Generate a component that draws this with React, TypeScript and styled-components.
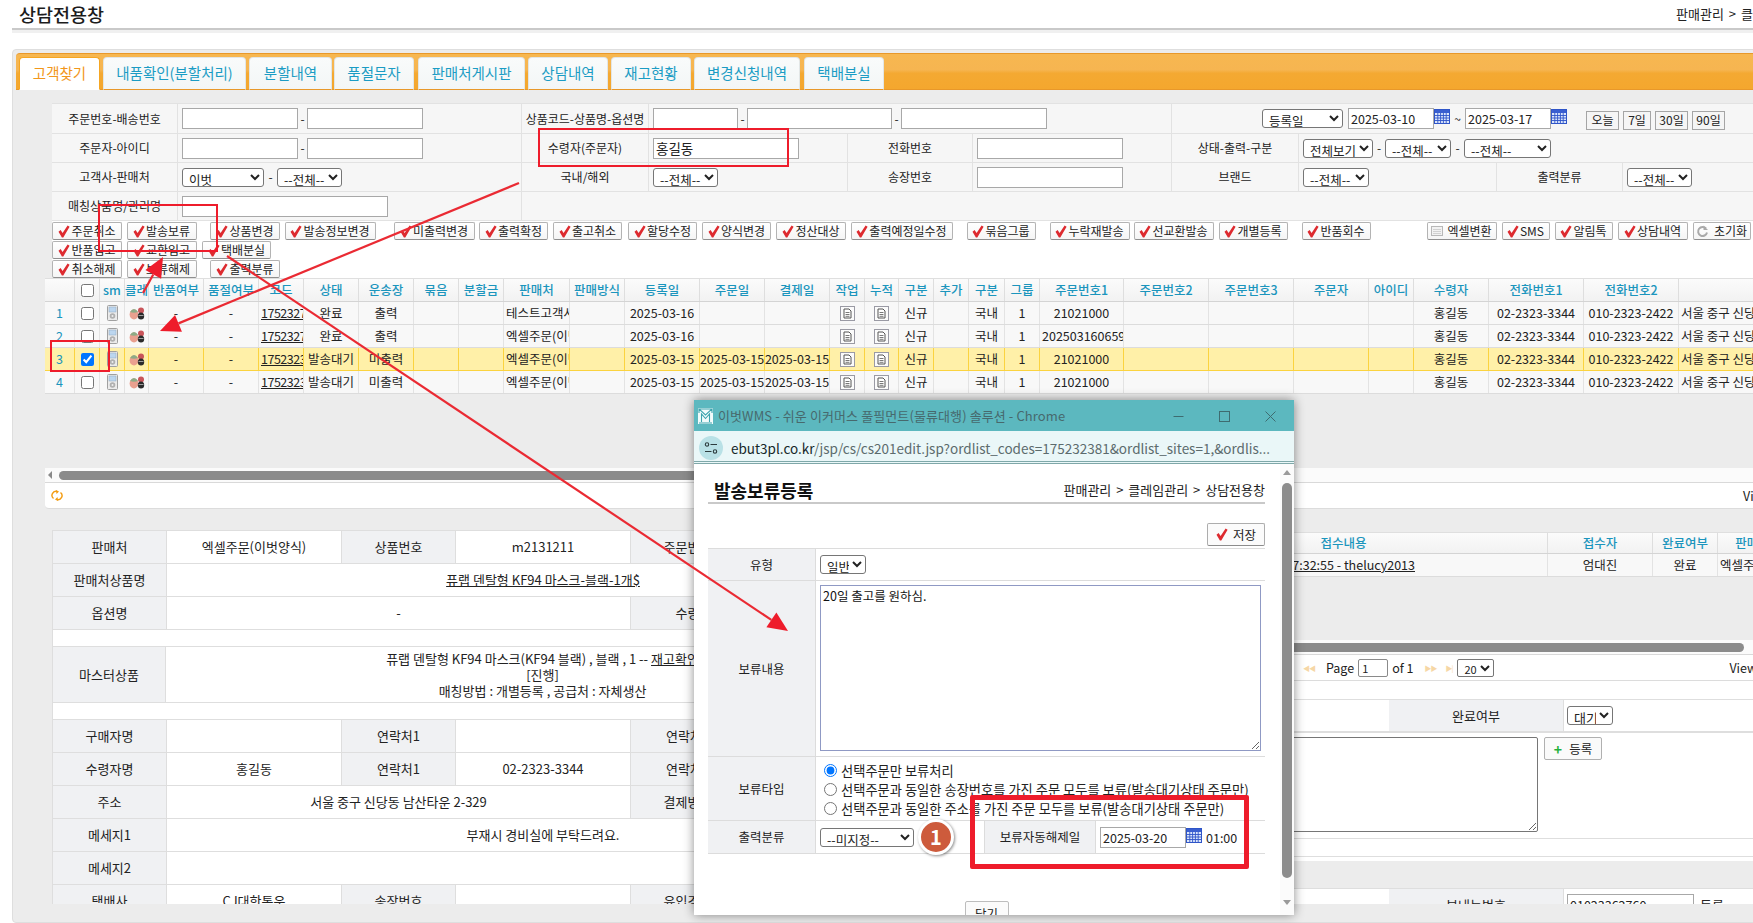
import React from "react";
import styled, { createGlobalStyle } from "styled-components";

const GlobalStyle = createGlobalStyle`
  html, body { margin: 0; padding: 0; background: #fff; overflow: hidden; }
  * { box-sizing: border-box; }
  body, input, select, textarea, button {
    font-family: "Noto Sans CJK KR", "Liberation Sans", sans-serif;
    color: #222;
  }
`;

const Page = styled.div`
  position: relative;
  width: 1753px;
  height: 923px;
  overflow: hidden;
  background: #fff;
`;

const TitleBar = styled.header`
  display: grid;
  grid-template-columns: 1664px 1fr;
  align-items: center;
  margin-left: 12px;
  height: 33px;
  border-bottom: 3px solid #f0f0f0;
  box-shadow: inset 0 -2px 0 #c9c9c9;
  padding-bottom: 2px;
`;
const Title = styled.h1`
  margin: 0 0 0 7px;
  font-size: 18.5px;
  line-height: 24px;
  font-weight: 500;
  color: #1c1c1c;
`;
const Crumb = styled.div`
  font-size: 13px;
  line-height: 18px;
  word-spacing: 2px;
  white-space: nowrap;
  overflow: hidden;
  color: #222;
`;

const Panel = styled.main`
  margin: 16px 0 0 12px;
  width: 1760px;
  height: 874px;
  border: 1px solid #dedede;
  border-radius: 4px;
  background: #ececec;
  padding: 3px 0 0 3px;
`;

const TabBar = styled.nav`
  display: flex;
  align-items: flex-end;
  height: 37px;
  padding-left: 3px;
  border-top: 1px solid #e8982a;
  border-bottom: 1px solid #e8982a;
  border-radius: 4px 0 0 0;
  background: linear-gradient(#f7b750, #f6b551 45%, #f4a932 55%, #f4a72e);
`;
const Tab = styled.div<{ $active?: boolean; $w: number; $ml: number }>`
  width: ${(p) => p.$w}px;
  margin-left: ${(p) => p.$ml}px;
  height: 33px;
  padding-bottom: 2px;
  display: flex;
  align-items: center;
  justify-content: center;
  font-size: 14.5px;
  line-height: 20px;
  white-space: nowrap;
  border: 1px solid ${(p) => (p.$active ? "#f5a623" : "#e2e6e6")};
  border-bottom: ${(p) => (p.$active ? "1px solid #fff" : "1px solid #e8982a")};
  border-radius: 4px 4px 0 0;
  color: ${(p) => (p.$active ? "#f2971b" : "#1b9cc4")};
  background: ${(p) => (p.$active ? "#fff" : "linear-gradient(#f9fbfb, #f3f6f6)")};
  margin-bottom: -1px;
`;

const Search = styled.section`
  margin: 13px 0 0 36px;
  display: grid;
  grid-template-columns: 126px 344px 127px 199px 125px 199px 127px 198px 126px 130px;
  grid-template-rows: 30px 29px 29px 29px;
  border-top: 1px solid #e2e2e2;
  font-size: 12px;
  background: #f6f6f6;
`;
const SLabel = styled.div`
  display: flex;
  align-items: center;
  justify-content: center;
  border-right: 1px solid #e2e2e2;
  border-bottom: 1px solid #e2e2e2;
  white-space: nowrap;
  line-height: 16px;
`;
const SField = styled.div<{ $span?: number; $pad?: number; $open?: boolean }>`
  grid-column: span ${(p) => p.$span ?? 1};
  display: flex;
  align-items: center;
  padding-left: ${(p) => p.$pad ?? 4}px;
  border-right: ${(p) => (p.$open ? "0" : "1px solid #e2e2e2")};
  border-bottom: 1px solid #e2e2e2;
  line-height: 16px;
  white-space: nowrap;
`;
const TextBox = styled.input<{ $w: number }>`
  width: ${(p) => p.$w}px;
  height: 21px;
  padding: 0 2px;
  border: 1px solid #a8a8a8;
  border-radius: 0;
  background: #fff;
  font-size: 12.5px;
  outline: none;
`;
const Pick = styled.select<{ $w: number }>`
  width: ${(p) => p.$w}px;
  height: 19px;
  padding: 0 0 0 2px;
  border: 1px solid #767676;
  border-radius: 3px;
  background: #fff;
  font-size: 12.5px;
  outline: none;
`;
const Dash = styled.span<{ $w?: number }>`
  width: ${(p) => p.$w ?? 9}px;
  text-align: center;
  font-size: 12px;
`;
const DayBtn = styled.button<{ $w: number; $ml: number }>`
  width: ${(p) => p.$w}px;
  height: 19px;
  margin: 3px 0 0 ${(p) => p.$ml}px;
  padding: 0;
  border: 1px solid #a5a5a5;
  background: #f5f5f5;
  font-size: 12px;
  line-height: 16px;
`;

const Toolbar = styled.section`
  height: 57px;
  margin-left: 36px;
  padding-top: 1px;
  display: flex;
  flex-direction: column;
  gap: 1px;
  background: #fff;
`;
const ToolRow = styled.div`
  display: flex;
  height: 18px;
`;
const ToolBtn = styled.button<{ $w: number; $ml: number }>`
  width: ${(p) => p.$w}px;
  margin-left: ${(p) => p.$ml}px;
  height: 18px;
  padding: 0;
  display: flex;
  align-items: center;
  justify-content: center;
  gap: 1px;
  border: 1px solid #b3b3b3;
  border-bottom-color: #8f8f8f;
  border-radius: 2px;
  background: linear-gradient(#fff, #f5f5f5);
  font-size: 12px;
  line-height: 16px;
  white-space: nowrap;
  flex: none;
`;

const GridBlock = styled.section`
  margin-left: 29px;
  width: 1730px;
`;
const HeadRow = styled.div<{ $cols: string; $h?: number }>`
  display: grid;
  grid-template-columns: ${(p) => p.$cols};
  height: ${(p) => p.$h ?? 24}px;
  border-top: 1px solid #dfdfdf;
  border-bottom: 1px solid #d4d4d4;
  background: linear-gradient(#fbfbfb, #f2f2f2);
  overflow: hidden;
`;
const HeadCell = styled.div`
  display: flex;
  align-items: center;
  justify-content: center;
  border-right: 1px solid #dedede;
  font-size: 12.5px;
  font-weight: 500;
  line-height: 16px;
  color: #1b95bd;
  white-space: nowrap;
  overflow: hidden;
`;
const DataRow = styled.div<{ $cols: string; $on?: boolean }>`
  display: grid;
  grid-template-columns: ${(p) => p.$cols};
  height: 23px;
  border-bottom: 1px solid ${(p) => (p.$on ? "#fbd33f" : "#dcdcdc")};
  background: ${(p) => (p.$on ? "#fff0a8" : "#f8f8f8")};
  overflow: hidden;
`;
const DataCell = styled.div<{ $on?: boolean; $left?: boolean; $blue?: boolean }>`
  display: flex;
  align-items: center;
  justify-content: ${(p) => (p.$left ? "flex-start" : "center")};
  padding-left: ${(p) => (p.$left ? 2 : 0)}px;
  border-right: 1px solid ${(p) => (p.$on ? "#fbd33f" : "#e3e3e3")};
  font-size: 12.5px;
  line-height: 16px;
  white-space: nowrap;
  overflow: hidden;
  color: ${(p) => (p.$blue ? "#1b95bd" : "#222")};
`;
const Link = styled.span`
  text-decoration: underline;
`;
const CodeLink = styled(Link)`
  letter-spacing: -0.5px;
`;
const GridGap = styled.div<{ $h: number }>`
  height: ${(p) => p.$h}px;
  background: #ececec;
`;
const Track = styled.div`
  position: relative;
  height: 15px;
  background: #fbfbfb;
  border-bottom: 1px solid #d9d9d9;
  display: flex;
  align-items: center;
`;
const TrackArrow = styled.span`
  margin-left: 3px;
  width: 0;
  height: 0;
  border-top: 4px solid transparent;
  border-bottom: 4px solid transparent;
  border-right: 4px solid #8a8a8a;
`;
const Thumb = styled.div<{ $ml: number; $w: number }>`
  margin-left: ${(p) => p.$ml}px;
  width: ${(p) => p.$w}px;
  height: 9px;
  border-radius: 5px;
  background: #8b8b8b;
`;
const GridFoot = styled.div`
  display: flex;
  align-items: center;
  height: 26px;
  background: #fff;
  border-bottom: 1px solid #dcdcdc;
  border-radius: 0 0 0 4px;
  font-size: 12.5px;
  white-space: nowrap;
  overflow: hidden;
`;

const Lower = styled.section`
  display: flex;
  margin-top: 21px;
  height: 374px;
  overflow: hidden;
`;
const FormCol = styled.div`
  margin-left: 36px;
  width: 868px;
  flex: none;
  background: #fff;
  border-top: 1px solid #dedede;
  border-left: 1px solid #dedede;
  height: 374px;
`;
const FormGrid = styled.div`
  display: grid;
  grid-template-columns: 114px 175px 114px 175px 114px 175px;
  grid-auto-rows: 33px;
`;
const FLabel = styled.div`
  display: flex;
  align-items: center;
  justify-content: center;
  background: #f0f1f3;
  border-right: 1px solid #dedede;
  border-bottom: 1px solid #dedede;
  font-size: 13px;
  line-height: 18px;
  white-space: nowrap;
`;
const FValue = styled.div<{ $span?: number }>`
  grid-column: span ${(p) => p.$span ?? 1};
  display: flex;
  align-items: center;
  justify-content: center;
  background: #fff;
  border-right: 1px solid #dedede;
  border-bottom: 1px solid #dedede;
  font-size: 13px;
  line-height: 18px;
  white-space: nowrap;
`;
const FormGap = styled.div`
  height: 17px;
  background: #fff;
  border-bottom: 1px solid #dedede;
`;
const MasterGrid = styled.div`
  display: grid;
  grid-template-columns: 113px 754px;
  height: 56px;
`;
const MasterText = styled.div`
  text-align: center;
  font-size: 13px;
  line-height: 16px;
  white-space: nowrap;
`;

const RightCol = styled.div`
  margin-left: 41px;
  width: 800px;
  flex: none;
`;
const LogRowText = styled.div`
  width: 100%;
  display: flex;
  justify-content: flex-end;
  padding-right: 132px;
`;
const PagerText = styled.span<{ $ml?: number }>`
  margin-left: ${(p) => p.$ml ?? 0}px;
  font-size: 12.5px;
  color: #222;
`;
const PagerSep = styled.span<{ $ml: number }>`
  margin-left: ${(p) => p.$ml}px;
  width: 2px;
  height: 18px;
  background: #e6e6e6;
`;
const PagerIcon = styled.span<{ $ml: number }>`
  margin-left: ${(p) => p.$ml}px;
  font-size: 7px;
  line-height: 12px;
  letter-spacing: -1px;
  color: #f6d7a6;
`;
const PageBox = styled.input`
  width: 30px;
  height: 18px;
  margin-left: 4px;
  padding: 0 3px;
  border: 1px solid #8a8a8a;
  border-radius: 2px;
  font-size: 11px;
  outline: none;
`;
const PageSize = styled.select`
  width: 37px;
  height: 18px;
  margin-left: 5px;
  padding: 0 0 0 2px;
  border: 1px solid #767676;
  border-radius: 2px;
  background: #fff;
  font-size: 11px;
`;
const RightForm = styled.div`
  background: #fff;
  padding-top: 18px;
  height: 180px;
`;
const RightGrid = styled.div<{ $h: number; $gap?: boolean }>`
  display: grid;
  grid-template-columns: 140px 288px 175px 1fr;
  height: ${(p) => p.$h}px;
  border-top: 1px solid #dedede;
  margin-bottom: ${(p) => (p.$gap ? 17 : 0)}px;
`;
const RLabel = styled(FLabel)``;
const RValue = styled.div<{ $span?: number; $pad?: number }>`
  grid-column: span ${(p) => p.$span ?? 1};
  display: flex;
  align-items: center;
  gap: 6px;
  padding-left: ${(p) => p.$pad ?? 3}px;
  border-bottom: 1px solid #dedede;
  background: #fff;
  font-size: 13px;
  white-space: nowrap;
`;
const WriteRow = styled(RValue)`
  align-items: flex-start;
  padding-top: 4px;
`;
const Memo = styled.textarea`
  width: 432px;
  height: 95px;
  border: 1px solid #767676;
  border-radius: 2px;
  outline: none;
`;
const AddBtn = styled.button`
  width: 58px;
  height: 23px;
  display: flex;
  align-items: center;
  justify-content: center;
  gap: 7px;
  padding: 0;
  border: 1px solid #b0b0b0;
  border-radius: 2px;
  background: #fafafa;
  font-size: 12.5px;
`;
const Plus = styled.span`
  color: #22b03c;
  font-weight: 700;
  font-size: 14px;
  line-height: 14px;
`;

/* Popup window */
const Popup = styled.aside`
  position: absolute;
  left: 694px;
  top: 400px;
  width: 600px;
  height: 515px;
  z-index: 10;
  display: flex;
  flex-direction: column;
  background: #fff;
  box-shadow: 0 0 10px rgba(0, 0, 0, 0.45);
`;
const WinTitle = styled.div`
  height: 31px;
  flex: none;
  display: flex;
  align-items: center;
  padding: 1px 0 0 4px;
  background: #5cb8bf;
  font-size: 13px;
  line-height: 16px;
  color: #47696d;
  white-space: nowrap;
`;
const WinTitleText = styled.span`
  margin-left: 5px;
  letter-spacing: 0.1px;
`;
const WinCtrls = styled.div`
  margin-left: auto;
  display: flex;
  gap: 35px;
  padding-right: 18px;
  align-items: center;
`;
const UrlBar = styled.div`
  height: 33px;
  flex: none;
  display: flex;
  align-items: center;
  padding: 3px 0 0 5px;
  gap: 8px;
  background: #eaf7f8;
  border-bottom: 3px double #7fa8a9;
  font-size: 13.5px;
  line-height: 18px;
  white-space: nowrap;
  color: #5c6b6d;
`;
const UrlHost = styled.span`
  color: #16282a;
`;
const SiteIcon = styled.span`
  width: 24px;
  height: 24px;
  border-radius: 50%;
  background: #b9e1e6;
  display: flex;
  align-items: center;
  justify-content: center;
  flex: none;
`;
const WinBody = styled.div`
  flex: 1;
  display: flex;
  min-height: 0;
  overflow: hidden;
`;
const Sheet = styled.div`
  width: 586px;
  padding-left: 14px;
  padding-right: 15px;
  flex: none;
`;
const SheetHead = styled.div`
  display: flex;
  align-items: center;
  justify-content: space-between;
  height: 40px;
  border-bottom: 2px solid #c9c9c9;
  padding: 14px 0 0 6px;
`;
const SheetTitle = styled.h2`
  margin: 0;
  font-size: 18px;
  line-height: 22px;
  font-weight: 700;
  color: #111;
`;
const SheetCrumb = styled.div`
  font-size: 13px;
  line-height: 16px;
  word-spacing: 2px;
  white-space: nowrap;
`;
const SaveRow = styled.div`
  display: flex;
  justify-content: flex-end;
  padding-top: 19px;
  height: 44px;
`;
const SaveBtn = styled.button`
  width: 58px;
  height: 23px;
  display: flex;
  align-items: center;
  justify-content: center;
  gap: 5px;
  padding: 0;
  border: 1px solid #adadad;
  border-bottom-color: #8c8c8c;
  border-radius: 2px;
  background: #fbfbfb;
  font-size: 12.5px;
`;
const SheetGrid = styled.div<{ $h: number; $cols?: string }>`
  display: grid;
  grid-template-columns: ${(p) => p.$cols ?? "108px 449px"};
  height: ${(p) => p.$h}px;
  border-bottom: 1px solid #dcdcdc;
`;
const SheetFirst = styled.div`
  border-top: 1px solid #dcdcdc;
`;
const PLabel = styled.div`
  display: flex;
  align-items: center;
  justify-content: center;
  background: #f0f1f3;
  border-right: 1px solid #dcdcdc;
  font-size: 12.5px;
  line-height: 16px;
  white-space: nowrap;
`;
const PValue = styled.div`
  display: flex;
  align-items: center;
  padding-left: 4px;
  font-size: 12.5px;
  white-space: nowrap;
`;
const PArea = styled.textarea`
  width: 441px;
  height: 166px;
  margin: 4px 0 0 0;
  padding: 2px 2px;
  border: 1px solid #8f99c4;
  font-size: 12.5px;
  line-height: 16px;
  outline: none;
  color: #111;
`;
const Radios = styled.div`
  display: flex;
  flex-direction: column;
  justify-content: center;
  padding: 2px 0 0 8px;
`;
const RadioLine = styled.label`
  display: flex;
  align-items: center;
  gap: 4px;
  height: 19px;
  font-size: 13.25px;
  line-height: 16px;
  white-space: nowrap;
`;
const Radio = styled.input`
  margin: 0;
  width: 13px;
  height: 13px;
  flex: none;
`;
const CloseRow = styled.div`
  display: flex;
  justify-content: center;
  margin-top: 47px;
`;
const CloseBtn = styled.button`
  width: 44px;
  height: 24px;
  padding: 0;
  border: 1px solid #bdbdbd;
  border-radius: 2px;
  background: #fbfbfb;
  font-size: 12.5px;
  flex: none;
`;
const WinScroll = styled.div`
  width: 14px;
  flex: none;
  display: flex;
  flex-direction: column;
  align-items: center;
  padding: 6px 0 6px;
  background: #fbfbfb;
`;
const ScrollUp = styled.span`
  width: 0;
  height: 0;
  border-left: 4px solid transparent;
  border-right: 4px solid transparent;
  border-bottom: 5px solid #9a9a9a;
`;
const ScrollDown = styled.span`
  width: 0;
  height: 0;
  border-left: 4px solid transparent;
  border-right: 4px solid transparent;
  border-top: 5px solid #9a9a9a;
  margin-top: 22px;
`;
const ScrollThumb = styled.div`
  width: 10px;
  height: 395px;
  margin-top: 8px;
  border-radius: 5px;
  background: #8c8c8c;
`;
const Flag = styled.div`
  position: absolute;
  left: 276px;
  top: 395px;
  width: 279px;
  height: 74px;
  border: 5px solid #ee1c2b;
  border-radius: 2px;
  pointer-events: none;
`;
const Badge = styled.div`
  position: absolute;
  left: 224px;
  top: 419px;
  width: 36px;
  height: 36px;
  border-radius: 50%;
  display: flex;
  align-items: center;
  justify-content: center;
  background: #cd5b3c;
  border: 3px solid #fff;
  box-shadow: 1px 1px 3px rgba(0, 0, 0, 0.45);
  color: #fff;
  font-size: 20px;
  line-height: 20px;
  font-weight: 700;
`;
const Overlay = styled.svg`
  position: absolute;
  left: 0;
  top: 0;
  z-index: 20;
  pointer-events: none;
`;

/* Drawings */
const Check = () => (
  <svg width="12" height="13" viewBox="0 0 12 13">
    <path d="M0.5 6.8 L2.6 5 L4.6 8 L9.6 0.6 L11.6 1.8 L5.3 12.4 L3.9 12.4 Z" fill="#dd2a2f" />
  </svg>
);
const Cal = () => (
  <svg width="16" height="15" viewBox="0 0 16 15" style={{ flex: "none", marginTop: -4 }}>
    <rect x="0.5" y="0.5" width="15" height="14" fill="#dbe6fb" stroke="#2f55c8" />
    <rect x="1" y="1" width="14" height="3" fill="#3a5fd0" />
    <path d="M1 6.5H15M1 9H15M1 11.5H15M3.8 4V14M6.6 4V14M9.4 4V14M12.2 4V14" stroke="#2f55c8" strokeWidth="0.9" />
  </svg>
);
const DocIcon = () => (
  <svg width="15" height="15" viewBox="0 0 15 15">
    <rect x="0.5" y="0.5" width="14" height="14" fill="#fbfbfb" stroke="#9a9aa4" />
    <path d="M4 3H9L11 5V12H4Z" fill="#fff" stroke="#555" strokeWidth="1" />
    <path d="M5.5 6.5H9.5M5.5 8.5H9.5M5.5 10.3H9.5" stroke="#555" strokeWidth="0.8" />
  </svg>
);
const SmIcon = () => (
  <svg width="11" height="16" viewBox="0 0 11 16">
    <rect x="0.5" y="0.5" width="10" height="15" rx="1" fill="#ebebeb" stroke="#a0a0a0" />
    <rect x="2" y="2" width="7" height="5" fill="#bcd6ef" stroke="#8fa8c0" strokeWidth="0.5" />
    <circle cx="5.5" cy="11" r="2.8" fill="#b0b0b0" />
    <circle cx="5.5" cy="11" r="1" fill="#efefef" />
  </svg>
);
const ClaimIcon = () => (
  <svg width="16" height="13" viewBox="0 0 16 13">
    <ellipse cx="5" cy="7.5" rx="4.4" ry="5" fill="#e9a08f" />
    <path d="M1 5 Q5 -1 9 5 Q5 6.5 1 5Z" fill="#8dab86" />
    <circle cx="12" cy="3.5" r="3" fill="#c9555a" />
    <ellipse cx="12" cy="9" rx="3.2" ry="3.6" fill="#2b2b2b" />
    <path d="M9.5 8.5H14.5" stroke="#bbb" strokeWidth="0.8" />
  </svg>
);
const Refresh = () => (
  <svg width="12" height="13" viewBox="0 0 12 13" style={{ marginLeft: 6, flex: "none" }}>
    <path d="M2.5 9.5A4 4 0 0 1 6 2.5M9.5 3.5A4 4 0 0 1 6 10.5" fill="none" stroke="#f39c12" strokeWidth="1.4" />
    <path d="M5 1L8 2.5L5.5 5M7 12L4 10.5L6.5 8" fill="#f39c12" />
  </svg>
);
const ExcelIcon = () => (
  <svg width="12" height="12" viewBox="0 0 12 12" style={{ marginRight: 3 }}>
    <rect x="0.5" y="1.5" width="11" height="9" fill="#f2f2f2" stroke="#b8b8b8" />
    <path d="M2.5 4.5H9.5M2.5 6.5H9.5M2.5 8.5H9.5" stroke="#b0b0b0" strokeDasharray="1 1" />
  </svg>
);
const ResetIcon = () => (
  <svg width="13" height="13" viewBox="0 0 13 13" style={{ marginRight: 4 }}>
    <path d="M10 3.5A4.5 4.5 0 1 0 11 7.5" fill="none" stroke="#a9a9a9" strokeWidth="2" />
    <path d="M7.5 0.5V5H12Z" fill="#a9a9a9" />
  </svg>
);
const Logo = () => (
  <svg width="15" height="16" viewBox="0 0 15 16" style={{ flex: "none" }}>
    <rect width="15" height="16" fill="#f2fbfb" />
    <path d="M1 1H14L7.5 7ZM1 15H14M3.5 14V6L7.5 10.5L11.5 6V14M1 1V5M14 1V5" fill="none" stroke="#3da4ae" strokeWidth="1.1" />
  </svg>
);
const WinMin = () => (
  <svg width="11" height="11" viewBox="0 0 11 11"><path d="M0.5 5.5H10.5" stroke="#3e6c70" /></svg>
);
const WinMax = () => (
  <svg width="11" height="11" viewBox="0 0 11 11"><rect x="0.5" y="0.5" width="10" height="10" fill="none" stroke="#3e6c70" /></svg>
);
const WinClose = () => (
  <svg width="11" height="11" viewBox="0 0 11 11"><path d="M0.5 0.5L10.5 10.5M10.5 0.5L0.5 10.5" stroke="#3e6c70" /></svg>
);
const TuneIcon = () => (
  <svg width="14" height="12" viewBox="0 0 14 12">
    <circle cx="3" cy="2.5" r="1.7" fill="none" stroke="#2c3b3d" strokeWidth="1.1" />
    <path d="M6.5 2.5H13M1 9.5H7.5" stroke="#2c3b3d" strokeWidth="1.2" />
    <circle cx="11" cy="9.5" r="1.7" fill="none" stroke="#2c3b3d" strokeWidth="1.1" />
  </svg>
);

const Arrow = ({ x1, y1, x2, y2 }: { x1: number; y1: number; x2: number; y2: number }) => {
  const a = Math.atan2(y2 - y1, x2 - x1);
  const len = 20;
  const half = 9;
  const bx = x2 - len * Math.cos(a);
  const by = y2 - len * Math.sin(a);
  const nx = -Math.sin(a) * half;
  const ny = Math.cos(a) * half;
  return (
    <g>
      <line x1={x1} y1={y1} x2={bx} y2={by} stroke="#ea2a33" strokeWidth="2.2" />
      <polygon points={`${x2},${y2} ${bx + nx},${by + ny} ${bx - nx},${by - ny}`} fill="#ee1c2b" />
    </g>
  );
};

/* Data */
const tabs: [string, number, number, boolean?][] = [
  ["고객찾기", 81, 0, true],
  ["내품확인(분할처리)", 143, 3],
  ["분할내역", 83, 3],
  ["품절문자", 80, 2],
  ["판매처게시판", 107, 4],
  ["상담내역", 80, 3],
  ["재고현황", 80, 3],
  ["변경신청내역", 106, 3],
  ["택배분실", 80, 4],
];

type Tool = { t: string; w: number; ml: number; icon?: "excel" | "reset" };
const row1: Tool[] = [
  { t: "주문취소", w: 70, ml: 0 },
  { t: "발송보류", w: 70, ml: 4.5 },
  { t: "상품변경", w: 70, ml: 13.5 },
  { t: "발송정보변경", w: 91, ml: 4.5 },
  { t: "미출력변경", w: 81, ml: 18 },
  { t: "출력확정", w: 69, ml: 4.5 },
  { t: "출고취소", w: 69, ml: 5 },
  { t: "할당수정", w: 69, ml: 6 },
  { t: "양식변경", w: 69, ml: 5 },
  { t: "정산대상", w: 70, ml: 5 },
  { t: "출력예정일수정", w: 102, ml: 4.5 },
  { t: "묶음그룹", w: 69, ml: 14 },
  { t: "누락재발송", w: 80, ml: 14 },
  { t: "선교환발송", w: 80, ml: 4 },
  { t: "개별등록", w: 69, ml: 5 },
  { t: "반품회수", w: 69, ml: 14 },
  { t: "엑셀변환", w: 70, ml: 56, icon: "excel" },
  { t: "SMS", w: 48, ml: 5 },
  { t: "알림톡", w: 58, ml: 5 },
  { t: "상담내역", w: 70, ml: 5 },
  { t: "초기화", w: 58, ml: 5, icon: "reset" },
];
const row2: Tool[] = [
  { t: "반품입고", w: 70, ml: 0 },
  { t: "교환입고", w: 70, ml: 4.5 },
  { t: "택배분실", w: 69, ml: 5.5 },
];
const row3: Tool[] = [
  { t: "취소해제", w: 70, ml: 0 },
  { t: "보류해제", w: 70, ml: 4.5 },
  { t: "출력분류", w: 70, ml: 13.5 },
];

const gridCols =
  "30px 25px 25px 24px 55px 55px 45px 55px 55px 45px 45px 66px 55px 75px 65px 65px 35px 34px 35px 35px 36px 35px 84px 85px 85px 75px 45px 75px 95px 95px 200px";
const heads = [
  "", "", "sm", "클레", "반품여부", "품절여부", "코드", "상태", "운송장", "묶음", "분할금", "판매처", "판매방식",
  "등록일", "주문일", "결제일", "작업", "누적", "구분", "추가", "구분", "그룹", "주문번호1", "주문번호2", "주문번호3",
  "주문자", "아이디", "수령자", "전화번호1", "전화번호2", "주소",
];
type Order = {
  code: string; state: string; print: string; shop: string; reg: string; ord: string; pay: string; no1: string;
};
const orders: Order[] = [
  { code: "175232781", state: "완료", print: "출력", shop: "테스트고객사", reg: "2025-03-16", ord: "", pay: "", no1: "21021000" },
  { code: "175232780", state: "완료", print: "출력", shop: "엑셀주문(이벗양식)", reg: "2025-03-16", ord: "", pay: "", no1: "202503160659411" },
  { code: "175232381", state: "발송대기", print: "미출력", shop: "엑셀주문(이벗양식)", reg: "2025-03-15", ord: "2025-03-15", pay: "2025-03-15", no1: "21021000" },
  { code: "175232380", state: "발송대기", print: "미출력", shop: "엑셀주문(이벗양식)", reg: "2025-03-15", ord: "2025-03-15", pay: "2025-03-15", no1: "21021000" },
];

const logCols = "179px 408px 105px 65px 70px";

const ToolButtons = ({ list }: { list: Tool[] }) => (
  <ToolRow>
    {list.map((b) => (
      <ToolBtn key={b.t} $w={b.w} $ml={b.ml}>
        {b.icon === "excel" ? <ExcelIcon /> : b.icon === "reset" ? <ResetIcon /> : <Check />}
        {b.t}
      </ToolBtn>
    ))}
  </ToolRow>
);

export default function App() {
  return (
    <Page>
      <GlobalStyle />
      <TitleBar>
        <Title>상담전용창</Title>
        <Crumb>판매관리 &gt; 클레임관리 &gt; 상담전용창</Crumb>
      </TitleBar>

      <Panel>
        <TabBar>
          {tabs.map(([t, w, ml, active]) => (
            <Tab key={t} $w={w} $ml={ml} $active={active}>{t}</Tab>
          ))}
        </TabBar>

        <Search>
          <SLabel>주문번호-배송번호</SLabel>
          <SField>
            <TextBox $w={116} /><Dash>-</Dash>
            <TextBox $w={116} />
          </SField>
          <SLabel>상품코드-상품명-옵션명</SLabel>
          <SField $span={3}>
            <TextBox $w={85} /><Dash>-</Dash>
            <TextBox $w={145} /><Dash>-</Dash>
            <TextBox $w={146} />
          </SField>
          <SField $span={4} $pad={90} $open>
            <Pick $w={81} defaultValue="등록일"><option>등록일</option></Pick>
            <TextBox $w={86} defaultValue="2025-03-10" style={{ marginLeft: 5 }} />
            <Cal />
            <Dash $w={15}>~</Dash>
            <TextBox $w={86} defaultValue="2025-03-17" />
            <Cal />
            <DayBtn $w={33} $ml={19}>오늘</DayBtn>
            <DayBtn $w={28} $ml={4}>7일</DayBtn>
            <DayBtn $w={33} $ml={4}>30일</DayBtn>
            <DayBtn $w={33} $ml={4}>90일</DayBtn>
          </SField>

          <SLabel>주문자-아이디</SLabel>
          <SField>
            <TextBox $w={116} /><Dash>-</Dash>
            <TextBox $w={116} />
          </SField>
          <SLabel>수령자(주문자)</SLabel>
          <SField><TextBox $w={146} defaultValue="홍길동" style={{ fontSize: 13.5 }} /></SField>
          <SLabel>전화번호</SLabel>
          <SField><TextBox $w={146} /></SField>
          <SLabel>상태-출력-구분</SLabel>
          <SField $span={3} $open>
            <Pick $w={70} defaultValue="전체보기"><option>전체보기</option></Pick><Dash $w={12}>-</Dash>
            <Pick $w={66} defaultValue="--전체--"><option>--전체--</option></Pick><Dash $w={13}>-</Dash>
            <Pick $w={87} defaultValue="--전체--"><option>--전체--</option></Pick>
          </SField>

          <SLabel>고객사-판매처</SLabel>
          <SField>
            <Pick $w={82} defaultValue="이벗"><option>이벗</option></Pick><Dash $w={13}>-</Dash>
            <Pick $w={65} defaultValue="--전체--"><option>--전체--</option></Pick>
          </SField>
          <SLabel>국내/해외</SLabel>
          <SField><Pick $w={65} defaultValue="--전체--"><option>--전체--</option></Pick></SField>
          <SLabel>송장번호</SLabel>
          <SField><TextBox $w={146} /></SField>
          <SLabel>브랜드</SLabel>
          <SField><Pick $w={66} defaultValue="--전체--"><option>--전체--</option></Pick></SField>
          <SLabel>출력분류</SLabel>
          <SField $open><Pick $w={65} defaultValue="--전체--"><option>--전체--</option></Pick></SField>

          <SLabel>매칭상품명/관리명</SLabel>
          <SField><TextBox $w={206} /></SField>
          <SField $span={8} $open />
        </Search>

        <Toolbar>
          <ToolButtons list={row1} />
          <ToolButtons list={row2} />
          <ToolButtons list={row3} />
        </Toolbar>

        <GridBlock>
          <HeadRow $cols={gridCols}>
            {heads.map((h, i) => (
              <HeadCell key={i}>
                {i === 1 ? <input type="checkbox" style={{ margin: 0 }} /> : h}
              </HeadCell>
            ))}
          </HeadRow>
          {orders.map((o, i) => {
            const on = i === 2;
            const text = (s: string, left?: boolean) => <DataCell $on={on} $left={left}>{s}</DataCell>;
            return (
              <DataRow key={o.code} $cols={gridCols} $on={on}>
                <DataCell $on={on} $blue>{i + 1}</DataCell>
                <DataCell $on={on}><input type="checkbox" defaultChecked={on} style={{ margin: 0 }} /></DataCell>
                <DataCell $on={on}><SmIcon /></DataCell>
                <DataCell $on={on}><ClaimIcon /></DataCell>
                {text("-")}
                {text("-")}
                <DataCell $on={on} $left><CodeLink>{o.code}</CodeLink></DataCell>
                {text(o.state)}
                {text(o.print)}
                {text("")}
                {text("")}
                {text(o.shop, true)}
                {text("")}
                {text(o.reg)}
                {text(o.ord)}
                {text(o.pay)}
                <DataCell $on={on}><DocIcon /></DataCell>
                <DataCell $on={on}><DocIcon /></DataCell>
                {text("신규")}
                {text("")}
                {text("국내")}
                {text("1")}
                <DataCell $on={on} $left={o.no1.length > 10}>{o.no1}</DataCell>
                {text("")}
                {text("")}
                {text("")}
                {text("")}
                {text("홍길동")}
                {text("02-2323-3344")}
                {text("010-2323-2422")}
                {text("서울 중구 신당동 남산타운 2-329", true)}
              </DataRow>
            );
          })}
          <GridGap $h={74} />
          <Track>
            <TrackArrow />
            <Thumb $ml={7} $w={840} />
          </Track>
          <GridFoot>
            <Refresh />
            <PagerText $ml={1680}>View 1 - 4 of 4</PagerText>
          </GridFoot>
        </GridBlock>

        <Lower>
          <FormCol>
            <FormGrid>
              <FLabel>판매처</FLabel><FValue>엑셀주문(이벗양식)</FValue>
              <FLabel>상품번호</FLabel><FValue>m2131211</FValue>
              <FLabel>주문번호</FLabel><FValue>175232381</FValue>
              <FLabel>판매처상품명</FLabel>
              <FValue $span={5}><Link>퓨랩 덴탈형 KF94 마스크-블랙-1개$</Link></FValue>
              <FLabel>옵션명</FLabel><FValue $span={3}>-</FValue>
              <FLabel>수량</FLabel><FValue>1</FValue>
            </FormGrid>
            <FormGap />
            <MasterGrid>
              <FLabel>마스터상품</FLabel>
              <FValue>
                <MasterText>
                  퓨랩 덴탈형 KF94 마스크(KF94 블랙) , 블랙 , 1 -- <Link>재고확인</Link>
                  <br />[진행]
                  <br />매칭방법 : 개별등록 , 공급처 : 자체생산
                </MasterText>
              </FValue>
            </MasterGrid>
            <FormGap />
            <FormGrid>
              <FLabel>구매자명</FLabel><FValue />
              <FLabel>연락처1</FLabel><FValue />
              <FLabel>연락처2</FLabel><FValue />
              <FLabel>수령자명</FLabel><FValue>홍길동</FValue>
              <FLabel>연락처1</FLabel><FValue>02-2323-3344</FValue>
              <FLabel>연락처2</FLabel><FValue>010-2323-2422</FValue>
              <FLabel>주소</FLabel><FValue $span={3}>서울 중구 신당동 남산타운 2-329</FValue>
              <FLabel>결제방법</FLabel><FValue />
              <FLabel>메세지1</FLabel><FValue $span={5}>부재시 경비실에 부탁드려요.</FValue>
              <FLabel>메세지2</FLabel><FValue $span={5} />
              <FLabel>택배사</FLabel><FValue>CJ대한통운</FValue>
              <FLabel>송장번호</FLabel><FValue />
              <FLabel>유입경로</FLabel><FValue />
            </FormGrid>
          </FormCol>

          <RightCol>
            <GridGap $h={2} />
            <HeadRow $cols={logCols} $h={22}>
              <HeadCell>접수일</HeadCell>
              <HeadCell>접수내용</HeadCell>
              <HeadCell>접수자</HeadCell>
              <HeadCell>완료여부</HeadCell>
              <HeadCell>판매처</HeadCell>
            </HeadRow>
            <DataRow $cols={logCols}>
              <DataCell />
              <DataCell>
                <LogRowText><Link>17:32:55 - thelucy2013</Link></LogRowText>
              </DataCell>
              <DataCell>엄대진</DataCell>
              <DataCell>완료</DataCell>
              <DataCell $left>엑셀주문(이벗양식)</DataCell>
            </DataRow>
            <GridGap $h={63} />
            <Track>
              <Thumb $ml={6} $w={777} />
            </Track>
            <GridFoot>
              <PagerIcon $ml={342}>◀◀</PagerIcon>
              <PagerSep $ml={7} />
              <PagerText $ml={4}>Page</PagerText>
              <PageBox defaultValue="1" />
              <PagerText $ml={4}>of 1</PagerText>
              <PagerSep $ml={5} />
              <PagerIcon $ml={6}>▶▶</PagerIcon>
              <PagerIcon $ml={9}>▶|</PagerIcon>
              <PageSize defaultValue="20"><option>20</option></PageSize>
              <PagerText $ml={235}>View 1 - 1 of 1</PagerText>
            </GridFoot>
            <RightForm>
              <RightGrid $h={33}>
                <RLabel>접수유형</RLabel>
                <RValue><Pick $w={60} defaultValue="일반"><option>일반</option></Pick></RValue>
                <RLabel>완료여부</RLabel>
                <RValue>
                  <Pick $w={46} defaultValue="대기" style={{ fontSize: 13 }}><option>대기</option></Pick>
                </RValue>
              </RightGrid>
              <RightGrid $h={107} $gap>
                <RLabel>접수내용</RLabel>
                <WriteRow $span={3} $pad={5}>
                  <Memo />
                  <AddBtn><Plus>+</Plus>등록</AddBtn>
                </WriteRow>
              </RightGrid>
              <RightGrid $h={32} />
              <RightGrid $h={33}>
                <RLabel>받는사람</RLabel>
                <RValue />
                <RLabel>보내는번호</RLabel>
                <RValue>
                  <TextBox $w={127} defaultValue="01023362760" />
                  등록
                </RValue>
              </RightGrid>
            </RightForm>
          </RightCol>
        </Lower>
      </Panel>

      <Popup>
        <WinTitle>
          <Logo />
          <WinTitleText>이벗WMS - 쉬운 이커머스 풀필먼트(물류대행) 솔루션 - Chrome</WinTitleText>
          <WinCtrls>
            <WinMin />
            <WinMax />
            <WinClose />
          </WinCtrls>
        </WinTitle>
        <UrlBar>
          <SiteIcon><TuneIcon /></SiteIcon>
          <span><UrlHost>ebut3pl.co.kr</UrlHost>/jsp/cs/cs201edit.jsp?ordlist_codes=175232381&amp;ordlist_sites=1,&amp;ordlis...</span>
        </UrlBar>
        <WinBody>
          <Sheet>
            <SheetHead>
              <SheetTitle>발송보류등록</SheetTitle>
              <SheetCrumb>판매관리 &gt; 클레임관리 &gt; 상담전용창</SheetCrumb>
            </SheetHead>
            <SaveRow>
              <SaveBtn><Check />저장</SaveBtn>
            </SaveRow>
            <SheetFirst>
              <SheetGrid $h={32}>
                <PLabel>유형</PLabel>
                <PValue><Pick $w={46} defaultValue="일반"><option>일반</option></Pick></PValue>
              </SheetGrid>
              <SheetGrid $h={176}>
                <PLabel>보류내용</PLabel>
                <PValue style={{ alignItems: "flex-start" }}>
                  <PArea defaultValue="20일 출고를 원하심." />
                </PValue>
              </SheetGrid>
              <SheetGrid $h={64}>
                <PLabel>보류타입</PLabel>
                <Radios>
                  <RadioLine><Radio type="radio" name="hold" defaultChecked />선택주문만 보류처리</RadioLine>
                  <RadioLine><Radio type="radio" name="hold" />선택주문과 동일한 송장번호를 가진 주문 모두를 보류(발송대기상태 주문만)</RadioLine>
                  <RadioLine><Radio type="radio" name="hold" />선택주문과 동일한 주소를 가진 주문 모두를 보류(발송대기상태 주문만)</RadioLine>
                </Radios>
              </SheetGrid>
              <SheetGrid $h={33} $cols="108px 168px 112px 169px">
                <PLabel>출력분류</PLabel>
                <PValue><Pick $w={94} defaultValue="--미지정--"><option>--미지정--</option></Pick></PValue>
                <PLabel style={{ borderLeft: "1px solid #dcdcdc" }}>보류자동해제일</PLabel>
                <PValue>
                  <TextBox $w={86} defaultValue="2025-03-20" />
                  <Cal />
                  <span style={{ marginLeft: 4 }}>01:00</span>
                </PValue>
              </SheetGrid>
            </SheetFirst>
            <CloseRow>
              <CloseBtn>닫기</CloseBtn>
            </CloseRow>
          </Sheet>
          <WinScroll>
            <ScrollUp />
            <ScrollThumb />
            <ScrollDown />
          </WinScroll>
        </WinBody>
        <Flag />
        <Badge>1</Badge>
      </Popup>

      <Overlay width="1753" height="923" viewBox="0 0 1753 923">
        <g fill="none" stroke="#ee1c2b" strokeWidth="2">
          <rect x="539" y="129" width="249" height="37" />
          <rect x="99" y="205" width="118" height="46" />
          <rect x="51" y="341" width="58" height="30" />
        </g>
        <Arrow x1={519} y1={183} x2={160} y2={331} />
        <Arrow x1={143} y1={293} x2={163} y2={257} />
        <Arrow x1={227} y1={256} x2={788} y2={631} />
      </Overlay>
    </Page>
  );
}
